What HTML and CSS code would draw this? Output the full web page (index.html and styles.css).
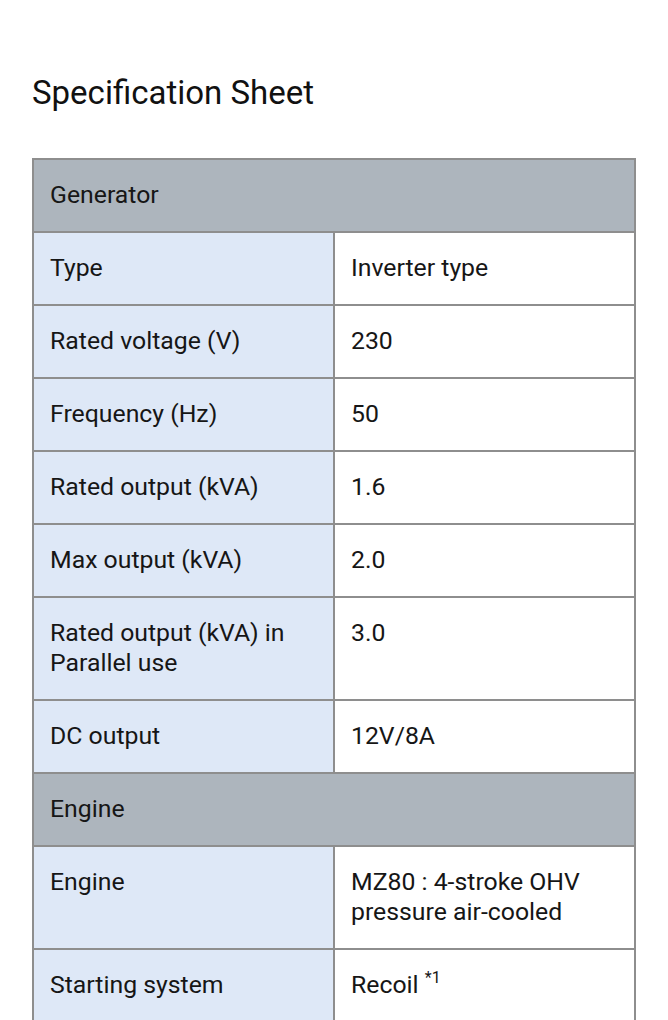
FILE: index.html
```html
<!DOCTYPE html>
<html lang="en">
<head>
<meta charset="utf-8">
<title>Specification Sheet</title>
<link rel="stylesheet" href="styles.css">
</head>
<body>
<main class="page">
  <h1 class="title">Specification Sheet</h1>
  <table class="spec">
    <tbody>
      <tr class="section"><th colspan="2">Generator</th></tr>
      <tr><th class="label">Type</th><td class="value">Inverter type</td></tr>
      <tr><th class="label">Rated voltage (V)</th><td class="value">230</td></tr>
      <tr><th class="label">Frequency (Hz)</th><td class="value">50</td></tr>
      <tr><th class="label">Rated output (kVA)</th><td class="value">1.6</td></tr>
      <tr><th class="label">Max output (kVA)</th><td class="value">2.0</td></tr>
      <tr><th class="label">Rated output (kVA) in Parallel use</th><td class="value">3.0</td></tr>
      <tr><th class="label">DC output</th><td class="value">12V/8A</td></tr>
      <tr class="section"><th colspan="2">Engine</th></tr>
      <tr><th class="label">Engine</th><td class="value">MZ80 : 4-stroke OHV pressure air-cooled</td></tr>
      <tr><th class="label">Starting system</th><td class="value">Recoil <sup class="note">*1</sup></td></tr>
    </tbody>
  </table>
</main>
</body>
</html>
```
FILE: styles.css
```css
html, body {
  margin: 0;
  padding: 0;
  background: #ffffff;
}
.page {
  padding: 0 32px;
  font-family: Roboto, "Liberation Sans", sans-serif;
  color: #161616;
}
.title {
  margin: 0;
  padding-top: 73px;
  font-size: 33px;
  font-weight: 400;
  line-height: 40px;
  color: #111111;
}
.spec {
  margin-top: 45px;
  width: 604px;
  border-collapse: collapse;
  table-layout: fixed;
  font-size: 24.8px;
  line-height: 30px;
}
.spec th, .spec td {
  border: 2px solid #8e8e8e;
  padding: 20px 17px 21px 16px;
  text-align: left;
  vertical-align: top;
  font-weight: 400;
}
.section th {
  background: #adb5bd;
}
.label {
  width: 50%;
  background: #dee8f7;
}
.value {
  background: #ffffff;
}
.note {
  font-size: 16px;
  line-height: 0;
  vertical-align: 10px;
}
```
